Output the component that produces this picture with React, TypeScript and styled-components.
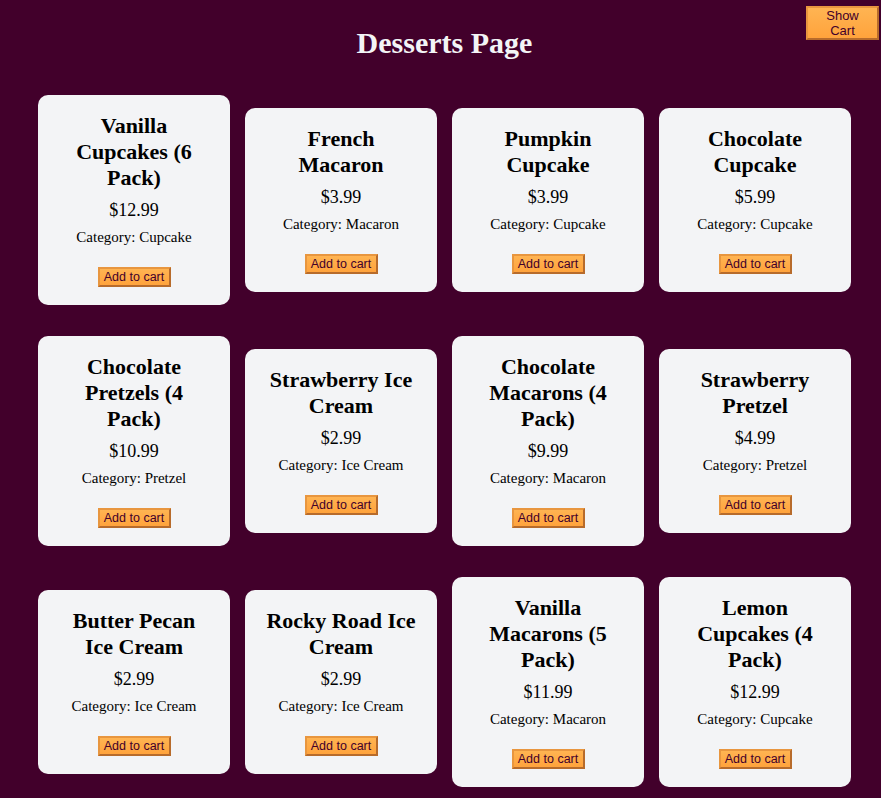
import { createGlobalStyle, styled } from "styled-components";

const GlobalStyle = createGlobalStyle`
  body {
    margin: 0;
    background-color: #42002b;
    font-family: "Liberation Serif", "Times New Roman", serif;
  }
`;

const Page = styled.div`
  width: 813px;
  margin-left: 38px;
  padding-bottom: 30px;
`;

const Title = styled.h1`
  margin: 0;
  padding-top: 25px;
  height: 36px;
  line-height: 36px;
  font-size: 30px;
  font-weight: bold;
  text-align: center;
  color: #f3f4f6;
`;

const CartButton = styled.button`
  position: absolute;
  top: 6px;
  right: 2px;
  width: 73px;
  padding: 0 6px;
  font-family: "Liberation Sans", Arial, sans-serif;
  font-size: 13px;
  line-height: 15px;
  color: #42002b;
  background: linear-gradient(#ffb452, #ffa33c);
  border: 2px solid;
  border-color: #e8963f #b76b2b #b76b2b #e8963f;
  cursor: pointer;
`;

const Grid = styled.div`
  display: grid;
  grid-template-columns: repeat(4, 192px);
  column-gap: 15px;
  row-gap: 31px;
  align-items: center;
  margin-top: 34px;
`;

const Card = styled.div`
  background-color: #f3f4f6;
  border-radius: 10px;
  padding: 18px 20px;
  text-align: center;
  color: #000;
`;

const Name = styled.h2`
  margin: 0;
  font-size: 22px;
  line-height: 26px;
  font-weight: bold;
`;

const Price = styled.p`
  margin: 9px 0 0;
  font-size: 18px;
  line-height: 21px;
`;

const Category = styled.p`
  margin: 8px 0 0;
  font-size: 15px;
  line-height: 17px;
`;

const AddButton = styled.button`
  display: block;
  margin: 21px auto 0;
  width: 73px;
  height: 20px;
  padding: 0 3px;
  font-family: "Liberation Sans", Arial, sans-serif;
  font-size: 12.5px;
  line-height: 16px;
  color: #42002b;
  background: linear-gradient(#ffb452, #ffa33c);
  border: 2px solid;
  border-color: #e8963f #b76b2b #b76b2b #e8963f;
  cursor: pointer;
`;

const desserts = [
  { name: "Vanilla Cupcakes (6 Pack)", price: 12.99, category: "Cupcake" },
  { name: "French Macaron", price: 3.99, category: "Macaron" },
  { name: "Pumpkin Cupcake", price: 3.99, category: "Cupcake" },
  { name: "Chocolate Cupcake", price: 5.99, category: "Cupcake" },
  { name: "Chocolate Pretzels (4 Pack)", price: 10.99, category: "Pretzel" },
  { name: "Strawberry Ice Cream", price: 2.99, category: "Ice Cream" },
  { name: "Chocolate Macarons (4 Pack)", price: 9.99, category: "Macaron" },
  { name: "Strawberry Pretzel", price: 4.99, category: "Pretzel" },
  { name: "Butter Pecan Ice Cream", price: 2.99, category: "Ice Cream" },
  { name: "Rocky Road Ice Cream", price: 2.99, category: "Ice Cream" },
  { name: "Vanilla Macarons (5 Pack)", price: 11.99, category: "Macaron" },
  { name: "Lemon Cupcakes (4 Pack)", price: 12.99, category: "Cupcake" },
];

function App() {
  return (
    <>
      <GlobalStyle />
      <CartButton>Show Cart</CartButton>
      <Page>
        <Title>Desserts Page</Title>
        <Grid>
          {desserts.map((item) => (
            <Card key={item.name}>
              <Name>{item.name}</Name>
              <Price>${item.price.toFixed(2)}</Price>
              <Category>Category: {item.category}</Category>
              <AddButton>Add to cart</AddButton>
            </Card>
          ))}
        </Grid>
      </Page>
    </>
  );
}

export default App;
